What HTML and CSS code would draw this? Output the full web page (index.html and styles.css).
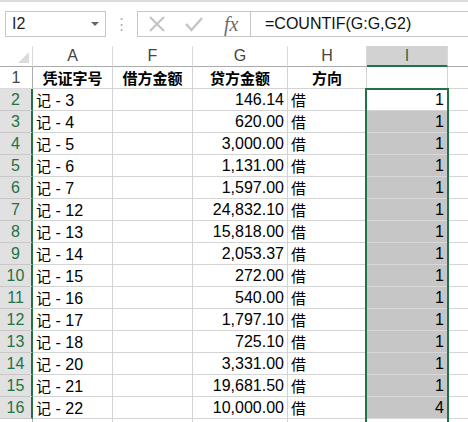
FILE: index.html
```html
<!DOCTYPE html>
<html>
<head>
<meta charset="utf-8">
<link rel="stylesheet" href="styles.css">
</head>
<body>
<div class="app">
  <div class="fbar">
    <div class="namebox"><span class="nb-text">I2</span><span class="nb-arrow"></span></div>
    <div class="dots">⋮</div>
    <div class="btns">
      <svg class="ico" width="18" height="18" viewBox="0 0 18 18"><path d="M2 2 L16 16 M16 2 L2 16" stroke="#c4c4c4" stroke-width="2.2" fill="none"/></svg>
      <svg class="ico" width="20" height="18" viewBox="0 0 20 18"><path d="M2 9 L7.5 15 L18 3" stroke="#c4c4c4" stroke-width="2.4" fill="none"/></svg>
      <span class="fx">fx</span>
    </div>
    <div class="formula">=COUNTIF(G:G,G2)</div>
  </div>
  <div class="sheet">
    <div class="grid">
      <div class="h corner"><span class="tri"></span></div>
      <div class="h col">A</div>
      <div class="h col">F</div>
      <div class="h col">G</div>
      <div class="h col">H</div>
      <div class="h col selcol">I</div>
      <div class="h col last"></div>

      <div class="rh">1</div>
      <div class="c b center"><span class="cj">凭证字号</span></div>
      <div class="c b center"><span class="cj">借方金额</span></div>
      <div class="c b center"><span class="cj">贷方金额</span></div>
      <div class="c b center"><span class="cj">方向</span></div>
      <div class="c"></div>
      <div class="c last"></div>
    </div>
    <div class="grid" id="rows"></div>
    <div class="selbox"></div>
  </div>
</div>
<script src="script.js"></script>
</body>
</html>
```

FILE: script.js
```js
const data = [
  [2, "3", "146.14", 1],
  [3, "4", "620.00", 1],
  [4, "5", "3,000.00", 1],
  [5, "6", "1,131.00", 1],
  [6, "7", "1,597.00", 1],
  [7, "12", "24,832.10", 1],
  [8, "13", "15,818.00", 1],
  [9, "14", "2,053.37", 1],
  [10, "15", "272.00", 1],
  [11, "16", "540.00", 1],
  [12, "17", "1,797.10", 1],
  [13, "18", "725.10", 1],
  [14, "20", "3,331.00", 1],
  [15, "21", "19,681.50", 1],
  [16, "22", "10,000.00", 4],
  [17, "", "", ""]
];
const rows = document.getElementById("rows");
let html = "";
for (const [n, v, g, i] of data) {
  const sel = n <= 16;
  const last = n > 16;
  html += `<div class="rh${sel ? " selrow" : ""}">${last ? "" : n}</div>`;
  html += `<div class="c">${v ? `<span><span class="cj">记</span> - ${v}</span>` : ""}</div>`;
  html += `<div class="c"></div>`;
  html += `<div class="c right">${g}</div>`;
  html += `<div class="c">${v ? '<span class="cj">借</span>' : ""}</div>`;
  html += `<div class="c right${n === 2 ? "" : (sel ? " gray" : "")}">${i}</div>`;
  html += `<div class="c last"></div>`;
}
rows.innerHTML = html;
```

FILE: styles.css
```css
html, body {
  margin: 0;
  padding: 0;
  background: #fff;
}
.app {
  width: 468px;
  height: 422px;
  overflow: hidden;
  border-top: 2px solid #dcdcdc;
  box-sizing: border-box;
  font-family: "Liberation Sans", "Noto Sans CJK SC", sans-serif;
  color: #000;
}
.fbar {
  display: flex;
  align-items: center;
  height: 26px;
  margin-top: 9px;
  padding-left: 5px;
}
.namebox {
  width: 101px;
  height: 26px;
  box-sizing: border-box;
  border: 1px solid #c6c6c6;
  display: flex;
  align-items: center;
  justify-content: space-between;
  padding: 0 6px 0 6px;
}
.nb-text {
  font-size: 16px;
  color: #222;
}
.nb-arrow {
  width: 0;
  height: 0;
  border-left: 4px solid transparent;
  border-right: 4px solid transparent;
  border-top: 4px solid #666;
}
.dots {
  width: 31px;
  text-align: center;
  color: #b0b0b0;
  font-size: 15px;
}
.btns {
  width: 113px;
  height: 26px;
  box-sizing: border-box;
  border: 1px solid #c6c6c6;
  border-right: none;
  display: flex;
  align-items: center;
  padding-left: 10px;
  gap: 18px;
}
.fx {
  font-family: "Liberation Serif", serif;
  font-style: italic;
  font-size: 20px;
  color: #6b6b6b;
  margin-left: 2px;
}
.formula {
  flex: 1;
  height: 26px;
  box-sizing: border-box;
  border: 1px solid #c6c6c6;
  border-right: none;
  padding-left: 14px;
  font-size: 16px;
  line-height: 24px;
  color: #111;
}
.sheet {
  position: relative;
  margin-top: 9px;
}
.grid {
  display: grid;
  grid-template-columns: 33px 80px 80px 95px 79px 81px 20px;
  grid-auto-rows: 22px;
}
.grid:first-child {
  grid-template-rows: 21px 22px;
}
.h {
  box-sizing: border-box;
  border-right: 1px solid #dadada;
  border-bottom: 1px solid #ababab;
  font-size: 16px;
  color: #444;
  display: flex;
  align-items: center;
  justify-content: center;
}
.corner {
  position: relative;
}
.tri {
  position: absolute;
  right: 3px;
  bottom: 3px;
  width: 0;
  height: 0;
  border-left: 11px solid transparent;
  border-bottom: 11px solid #dcdcdc;
}
.selcol {
  background: #d2d2d2;
  color: #217346;
  border-bottom: 2px solid #217346;
}
.h.last {
  border-right: none;
}
.rh {
  box-sizing: border-box;
  border-right: 1px solid #ababab;
  border-bottom: 1px solid #dadada;
  font-size: 16px;
  color: #444;
  display: flex;
  align-items: center;
  justify-content: center;
}
.rh.selrow {
  background: #e1e1e1;
  color: #217346;
  border-right: 2px solid #217346;
  border-bottom-color: #c8c8c8;
}
.c {
  box-sizing: border-box;
  border-right: 1px solid #d4d4d4;
  border-bottom: 1px solid #d4d4d4;
  font-size: 16px;
  display: flex;
  align-items: center;
  padding: 0 3px;
  white-space: nowrap;
  overflow: hidden;
}
.c.last {
  border-right: none;
}
.c.b {
  font-weight: bold;
}
.center {
  justify-content: center;
}
.right {
  justify-content: flex-end;
}
.gray {
  background: #c6c6c6;
  border-bottom-color: #d9d9d9;
}
.cj {
  font-size: 15px;
  font-family: "Noto Sans CJK SC", sans-serif;
}
.selbox {
  position: absolute;
  left: 365px;
  top: 42px;
  width: 84px;
  height: 345px;
  box-sizing: border-box;
  border: 2px solid #217346;
  pointer-events: none;
}
```
